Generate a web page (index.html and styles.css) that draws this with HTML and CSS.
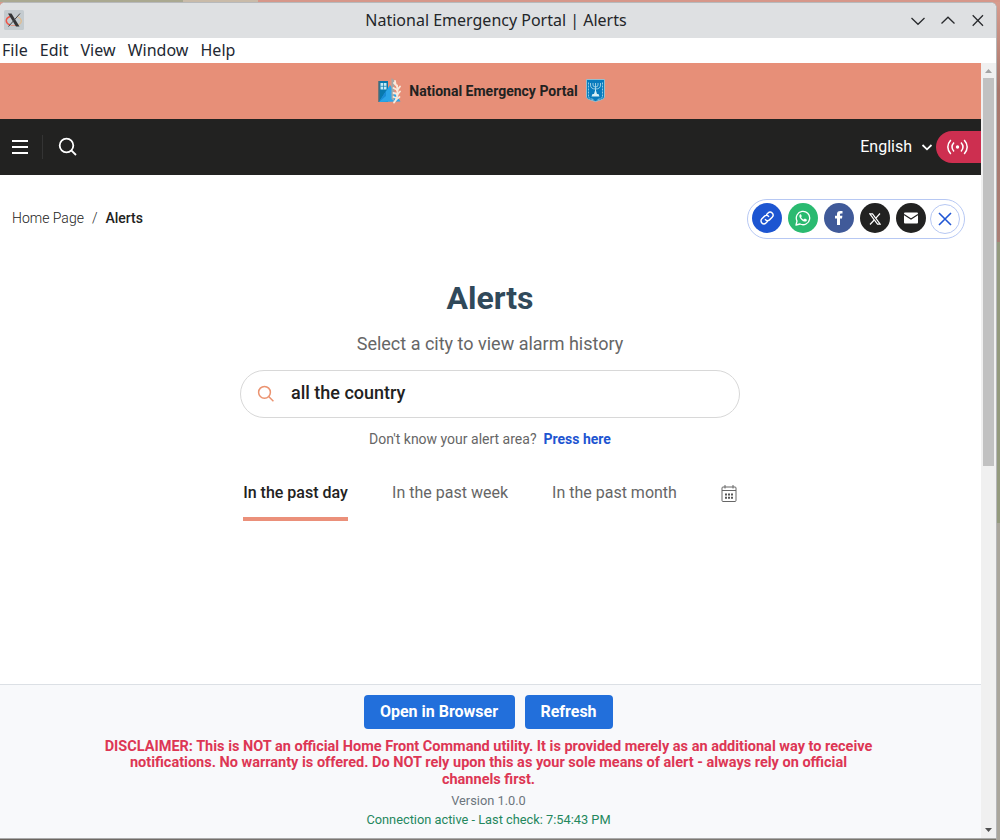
FILE: index.html
```html
<!DOCTYPE html>
<html lang="en">
<head>
<meta charset="utf-8">
<title>National Emergency Portal | Alerts</title>
<link rel="stylesheet" href="styles.css">
</head>
<body>
<div class="window">
  <header class="titlebar">
    <svg class="app-icon" width="20" height="20" viewBox="0 0 20 20"><rect width="20" height="20" rx="1.5" fill="#c4cbcf"/><path d="M6 6.500C1 8.500 1 13 6 15" fill="none" stroke="#ef5548" stroke-width="1.500"/><path d="M13 6.500c5 2 6 6 1 8.500" fill="none" stroke="#dfbd91" stroke-width="1.300"/><path d="M6.500 15.500h7" stroke="#df9685"/><path d="M4 3.500h3.500l8 13H12z" fill="#333436"/><path d="M16 3.500 4.500 16.500" stroke="#44474a" stroke-width="1"/></svg>
    <div class="window-title">National Emergency Portal | Alerts</div>
    <div class="window-controls">
      <svg width="14" height="14" viewBox="0 0 14 14"><path d="m.5 4 6.500 6.300L13.500 4"/></svg>
      <svg width="14" height="14" viewBox="0 0 14 14"><path d="M.5 9.500 7 3.200 13.500 9.500"/></svg>
      <svg width="14" height="14" viewBox="0 0 14 14"><path d="m1.700 1.200 10.300 10.500M12 1.200 1.700 11.700"/></svg>
    </div>
  </header>
  <nav class="menubar"><span>File</span><span>Edit</span><span>View</span><span>Window</span><span>Help</span></nav>
  <div class="viewport">
    <div class="page">
      <div class="banner">
        <svg width="24" height="26" viewBox="0 0 24 26"><path d="M2 3h9v21H2z" fill="#0879ae"/><path d="M2 3v21" stroke="#496c79" stroke-width="1.500"/><path d="M3.500 5h6v6.500h-6z" fill="#c7eaf4"/><path d="M6.500 5v6.500M3.500 8.300h6" stroke="#0879ae" stroke-width=".7"/><path d="M2 24 13 7l10.500 16.500z" fill="#2ba5e9"/><path d="M2 24 9 13v5z" fill="#198bd6"/><path d="m14.500 0 2.500 2v21l-2.500-2z" fill="#a3a7a6"/><g fill="none" stroke="#f8e9dc" stroke-width="1.800" stroke-linecap="round"><path d="M17 24.500c4-4 4-9 3-17"/><path d="m20 8-3-3m3.500 7-4-2m4.200 6-4.200-1m3 5-3-1m3.500-6.500 3-4m-3 8.500 3-3.500m-4 8 3.500-2.500M18.500 6l-.5-3"/></g></svg>
        <strong>National Emergency Portal</strong>
        <svg width="20" height="24" viewBox="0 0 20 24"><path d="M.5.500h18V18q0 2-4 3l-5 1.500-5-1.500q-4-1-4-3z" fill="#087bbd" stroke="#9fcddc" stroke-width=".8"/><g fill="none" stroke="#b8dfed" stroke-width=".8"><path d="M2.500 3.500v14q0 2 5 3m9-17v14q0 2-5 3" stroke-dasharray="2 1"/><path d="M9.500 4v10M4.500 4v2q0 4 5 4t5-4V4M7 4v2q0 2 2.500 2T12 6V4"/></g><path d="M9.500 10 8 15H6.500l-1 2.500h8l-1-2.500H11z" fill="#d6eef5"/></svg>
      </div>
      <div class="navbar">
        <svg width="16" height="16" viewBox="0 0 16 16"><path d="M0 2h16M0 8h16M0 14h16" stroke="#fff" stroke-width="2"/></svg>
        <i class="nav-divider"></i>
        <svg class="nav-search" width="20" height="20" viewBox="0 0 20 20"><circle cx="8.500" cy="8.500" r="6.800"/><path d="m13.300 13.300 4.700 4.700"/></svg>
        <span class="language">English</span>
        <svg class="chevron" width="12" height="12" viewBox="0 0 12 12"><path d="m1.500 4 4.500 4.300L10.500 4"/></svg>
        <div class="live"><svg width="22" height="18" viewBox="0 0 22 18"><circle cx="10.500" cy="9" r="1.700" fill="#fff" stroke="none"/><path d="M7 4.500q-4 4.500 0 9M14 4.500q4 4.500 0 9M3.800 2q-6 7 0 14M17.200 2q6 7 0 14"/></svg></div>
      </div>
      <main class="content">
        <div class="top-row">
          <div class="breadcrumb"><span>Home Page</span><span class="slash">/</span><b>Alerts</b></div>
          <div class="share">
            <a class="circle link"><svg width="16" height="16" viewBox="0 0 18 18" fill="none" stroke="#fff" stroke-width="1.600" stroke-linecap="round"><path d="M7.200 10.800a3.200 3.200 0 0 0 4.600.3l3-3a3.250 3.250 0 0 0-4.600-4.600L8.600 5.100M10.800 7.200a3.200 3.200 0 0 0-4.600-.3l-3 3a3.250 3.250 0 0 0 4.600 4.600l1.600-1.600"/></svg></a>
            <a class="circle whatsapp"><svg width="16" height="16" viewBox="0 0 16 16"><path d="M1 15l1-4A6.700 6.700 0 1 1 5 14z" fill="none" stroke="#fff" stroke-width="1.300" stroke-linejoin="round"/><path d="M5.300 4.200c-2 1.300-.5 4 1.400 5.700 2 1.900 4.400 2.400 5.100.5.200-.6.100-.8-.2-1l-1.600-.8c-.7-.1-.8 1-1.400.9-.9-.3-2-1.300-2.500-2.300-.1-.4.800-.7.600-1.300L6.100 4.400q-.3-.4-.8-.2z" fill="#fff"/></svg></a>
            <a class="circle facebook"><svg width="10" height="16" viewBox="0 0 10 16"><path d="M3 15V8.500H1V5.800h2V4q0-3 3.300-3H8.500v2.500H7Q6 3.500 6 4.500v1.300h2.400L8 8.500H6V15z" fill="#fff"/></svg></a>
            <a class="circle dark x"><svg width="12" height="12" viewBox="0 0 12 12" fill="none" stroke="#fff" stroke-width="1.200"><path d="M.8.8h2.700l7.700 10.400H8.500z"/><path d="M11 .5 6.900 5.200M5.200 7 1 11.500"/></svg></a>
            <a class="circle dark"><svg width="14" height="12" viewBox="0 0 14 12"><rect y=".5" width="14" height="11" rx="1" fill="#fff"/><path d="m0 2.500 7 4.500 7-4.500" fill="none" stroke="#222221" stroke-width="1.100"/></svg></a>
            <a class="circle close"><svg width="14" height="14" viewBox="0 0 14 14"><path d="m1 1 12 12M13 1 1 13" stroke="#2056d5" stroke-width="1.600"/></svg></a>
          </div>
        </div>
        <div class="center-column">
          <h1>Alerts</h1>
          <p class="subtitle">Select a city to view alarm history</p>
          <div class="search-box"><svg width="18" height="18" viewBox="0 0 18 18"><circle cx="7.500" cy="7.300" r="5.900"/><path d="m11.700 11.500 4.700 4.700"/></svg><span>all the country</span></div>
          <p class="area">Don't know your alert area?<a>Press here</a></p>
          <div class="tabs">
            <span class="tab active">In the past day</span><span class="tab">In the past week</span><span class="tab">In the past month</span>
            <svg width="16" height="18" viewBox="0 0 16 18"><rect x="1" y="2" width="14" height="14.500" rx="1" fill="none" stroke="#666"/><path d="M1 5.500h14M4 0v3.500M12 0v3.500" fill="none" stroke="#666"/><path d="M4 9.500h8M4 12.700h8" stroke="#555" stroke-width="2" stroke-dasharray="2 1"/></svg>
          </div>
        </div>
      </main>
      <footer class="footer">
        <div class="actions"><button>Open in Browser</button><button>Refresh</button></div>
        <p class="disclaimer">DISCLAIMER: This is NOT an official Home Front Command utility. It is provided merely as an additional way to receive<br>notifications. No warranty is offered. Do NOT rely upon this as your sole means of alert - always rely on official<br>channels first.</p>
        <p class="version">Version 1.0.0</p>
        <p class="connection">Connection active - Last check: 7:54:43 PM</p>
      </footer>
    </div>
    <div class="scrollbar">
      <svg width="15" height="15" viewBox="0 0 15 15"><path d="M4 10 7.500 6 11 10z" fill="#a3a3a3"/></svg>
      <i class="thumb"></i>
      <svg class="down" width="15" height="15" viewBox="0 0 15 15"><path d="M4 5h7l-3.500 4z" fill="#505050"/></svg>
    </div>
  </div>
</div>
</body>
</html>
```
FILE: styles.css
```css
* { box-sizing: border-box; }
body {
  margin: 0; width: 1000px; height: 840px; overflow: hidden; padding-top: 2px;
  font-family: Roboto, sans-serif; color: #222221;
  background:
    linear-gradient(90deg, #aaa991 0 183px, #c9bba9 183px 258px, #d6978a 258px) 0 0 / 100% 2px no-repeat,
    linear-gradient(90deg, #69645e, #817c78 45%, #77746b) 0 838px / 996px 2px no-repeat,
    linear-gradient(#d99c8e, #a8776c 90px, #aa7f76 242px, #949a7e 242px 523px, #aaa69c 523px);
}
p, h1 { margin: 0; }
svg { display: block; flex: none; }
.window { width: 997px; height: 837px; display: flex; flex-direction: column; border-top: 1px solid #b7b9bb; border-right: 1px solid #b5b6b8; border-bottom: 1px solid #aaa; border-radius: 5px 6px 0 0; overflow: hidden; background: #fff; }
.titlebar { height: 35px; display: flex; align-items: center; background: #dee0e2; padding: 0 11px 0 4px; font-family: "Noto Sans", sans-serif; flex: none; }
.app-icon { margin-top: -1px; }
.window-title { flex: 1; text-align: center; font-size: 16px; color: #232629; padding-left: 57px; line-height: 35px; }
.window-controls { display: flex; gap: 16px; }
.window-controls path { fill: none; stroke: #292b2e; stroke-width: 1.3; }
.menubar { height: 25px; flex: none; display: flex; gap: 12px; padding-left: 2px; font: 16px/25px "Noto Sans", sans-serif; letter-spacing: .03px; color: #222832; }
.viewport { flex: 1; min-height: 0; display: flex; }
.page { width: 981px; display: flex; flex-direction: column; }
.banner { height: 56px; flex: none; display: flex; align-items: center; justify-content: center; gap: 8px; padding-left: 2px; background: #e78f78; font-size: 14px; }
.navbar { height: 56px; flex: none; display: flex; align-items: center; padding-left: 12px; background: #222221; color: #fff; }
.nav-divider { width: 1px; height: 24px; background: #343434; margin: 0 15px 0 14px; }
.nav-search { fill: none; stroke: #fff; stroke-width: 1.8; }
.language { margin-left: auto; font-size: 16px; padding-bottom: 2px; }
.chevron { margin: 0 3px 0 9px; fill: none; stroke: #fff; stroke-width: 1.8; }
.live { width: 45px; height: 32px; border-radius: 16px 0 0 16px; background: #cd2f50; display: flex; align-items: center; padding-left: 11px; }
.live svg { fill: none; stroke: #fff; stroke-width: 1.5; }
.content { flex: 1; min-height: 0; padding-top: 24px; }
.top-row { width: 100%; height: 40px; display: flex; justify-content: space-between; padding: 0 16px 0 12px; }
.breadcrumb { display: flex; font-size: 14px; line-height: 38px; font-weight: 300; }
.slash { margin: 0 8px; }
.breadcrumb b { font-weight: 500; }
.share { width: 218px; height: 40px; border: 1px solid #b7c8f3; border-radius: 20px; display: flex; gap: 6px; padding: 3px 4px; }
.circle { width: 30px; height: 30px; border-radius: 50%; display: flex; align-items: center; justify-content: center; }
.link { background: #1d55d1; }
.whatsapp { background: #2aba70; }
.facebook { background: #405a99; }
.dark { background: #222221; }
.x { padding-top: 1px; }
.close { border: 1px solid #b7c8f3; margin: 1px 0 0 -2px; }
.center-column { width: 980px; display: flex; flex-direction: column; align-items: center; }
h1 { font-size: 32px; line-height: 40px; margin-top: 39px; color: #30495a; }
.subtitle { font-size: 18px; line-height: 24px; margin-top: 14px; color: #666; }
.search-box { width: 500px; height: 48px; margin-top: 14px; border: 1px solid #d8d8d8; border-radius: 24px; display: flex; align-items: center; padding-left: 16px; gap: 16px; font-size: 18px; font-weight: 500; flex: none; }
.search-box svg { fill: none; stroke: #eb9370; stroke-width: 1.5; }
.search-box span { padding-bottom: 4px; }
.area { font-size: 14px; line-height: 20px; margin-top: 11px; color: #666; }
.area a { font-weight: 700; color: #1e55d1; margin-left: 7px; }
.tabs { width: 494px; margin-top: 31px; display: flex; justify-content: space-between; font-size: 16px; line-height: 25px; color: #666; }
.tab { height: 41px; white-space: nowrap; }
.active { width: 105px; color: #222221; font-weight: 500; text-align: center; border-bottom: 4px solid #eb907a; }
.tabs svg { margin-top: 5px; }
.footer { height: 154px; flex: none; background: #f8f9fb; border-top: 1px solid #dce0e5; padding: 10px 4px 0 0; display: flex; flex-direction: column; align-items: center; text-align: center; }
.actions { display: flex; gap: 10px; }
.actions button { height: 34px; border: 0; border-radius: 4px; padding: 0 16px 2px; background: #226fdb; color: #fff; font: 700 16px Roboto, sans-serif; }
.actions button:first-child { width: 151px; padding: 0 1px 2px 0; }
.actions button:last-child { width: 88px; padding: 0 1px 2px 0; }
.disclaimer { margin-top: 9.6px; font-size: 14.5px; line-height: 16.5px; font-weight: 700; color: #dd3654; white-space: nowrap; }
.version { margin-top: 3.9px; font-size: 12.8px; line-height: 18px; color: #6c757d; }
.connection { margin-top: 1px; font-size: 12.8px; line-height: 18px; color: #24875d; }
.scrollbar { width: 15px; background: #f0f0f0; display: flex; flex-direction: column; }
.thumb { height: 388px; width: 11px; margin-left: 2px; background: #c1c1c1; }
.down { margin-top: auto; }
```
